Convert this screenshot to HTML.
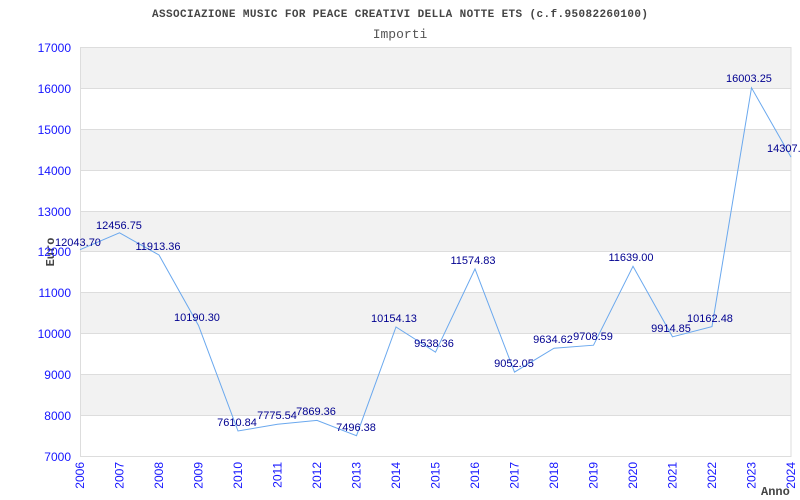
<!DOCTYPE html>
<html><head><style>
body{margin:0;background:#fff}
svg{display:block}
</style></head><body>
<svg width="800" height="500" xmlns="http://www.w3.org/2000/svg">
<rect width="800" height="500" fill="#fff"/>
<g fill="#f2f2f2">
<rect x="80" y="47" width="711" height="41"/>
<rect x="80" y="129" width="711" height="41"/>
<rect x="80" y="211" width="711" height="41"/>
<rect x="80" y="292" width="711" height="41"/>
<rect x="80" y="374" width="711" height="41"/>
</g>
<g stroke="#dddddd" stroke-width="1">
<line x1="80" y1="88.5" x2="791" y2="88.5"/>
<line x1="80" y1="129.5" x2="791" y2="129.5"/>
<line x1="80" y1="170.5" x2="791" y2="170.5"/>
<line x1="80" y1="211.5" x2="791" y2="211.5"/>
<line x1="80" y1="251.5" x2="791" y2="251.5"/>
<line x1="80" y1="292.5" x2="791" y2="292.5"/>
<line x1="80" y1="333.5" x2="791" y2="333.5"/>
<line x1="80" y1="374.5" x2="791" y2="374.5"/>
<line x1="80" y1="415.5" x2="791" y2="415.5"/>
<rect x="80.5" y="47.5" width="710.5" height="409" fill="none"/>
</g>
<g font-family="Liberation Mono, monospace" fill="#444">
<text x="400" y="17" text-anchor="middle" font-size="11" font-weight="bold" textLength="496">ASSOCIAZIONE MUSIC FOR PEACE CREATIVI DELLA NOTTE ETS (c.f.95082260100)</text>
<text x="400" y="38" text-anchor="middle" font-size="13" fill="#555">Importi</text>
<text transform="translate(54,252) rotate(-90)" text-anchor="middle" font-size="12" font-weight="bold">Euro</text>
<text x="761" y="495" font-size="12" font-weight="bold">Anno</text>
</g>
<g font-family="Liberation Sans, sans-serif" font-size="12" fill="#1515ff" text-anchor="end">
<text x="71" y="52">17000</text><text x="71" y="93">16000</text><text x="71" y="134">15000</text>
<text x="71" y="175">14000</text><text x="71" y="216">13000</text><text x="71" y="256">12000</text>
<text x="71" y="297">11000</text><text x="71" y="338">10000</text><text x="71" y="379">9000</text>
<text x="71" y="420">8000</text><text x="71" y="461">7000</text>
</g>
<g font-family="Liberation Sans, sans-serif" font-size="12" fill="#1515ff" text-anchor="end">
<text transform="translate(84,462) rotate(-90)">2006</text>
<text transform="translate(123.5,462) rotate(-90)">2007</text>
<text transform="translate(163,462) rotate(-90)">2008</text>
<text transform="translate(202.5,462) rotate(-90)">2009</text>
<text transform="translate(242,462) rotate(-90)">2010</text>
<text transform="translate(281.5,462) rotate(-90)">2011</text>
<text transform="translate(321,462) rotate(-90)">2012</text>
<text transform="translate(360.5,462) rotate(-90)">2013</text>
<text transform="translate(400,462) rotate(-90)">2014</text>
<text transform="translate(439.5,462) rotate(-90)">2015</text>
<text transform="translate(479,462) rotate(-90)">2016</text>
<text transform="translate(518.5,462) rotate(-90)">2017</text>
<text transform="translate(558,462) rotate(-90)">2018</text>
<text transform="translate(597.5,462) rotate(-90)">2019</text>
<text transform="translate(637,462) rotate(-90)">2020</text>
<text transform="translate(676.5,462) rotate(-90)">2021</text>
<text transform="translate(716,462) rotate(-90)">2022</text>
<text transform="translate(755.5,462) rotate(-90)">2023</text>
<text transform="translate(795,462) rotate(-90)">2024</text>
</g>
<polyline fill="none" stroke="#6aa8ee" stroke-width="1" points="80,249.7 119.5,232.8 159,255 198.5,325.5 238,431 277.5,424.3 317,420.4 356.5,435.7 396,327 435.5,352.2 475,268.9 514.5,372.1 554,348.2 593.5,345.2 633,266.3 672.5,336.8 712,326.6 751.5,87.8 791,157.1"/>
<g font-family="Liberation Sans, sans-serif" font-size="11" fill="#000090" text-anchor="middle">
<text x="78" y="246">12043.70</text>
<text x="119" y="229">12456.75</text>
<text x="158" y="250">11913.36</text>
<text x="197" y="321">10190.30</text>
<text x="237" y="426">7610.84</text>
<text x="277" y="419">7775.54</text>
<text x="316" y="415">7869.36</text>
<text x="356" y="431">7496.38</text>
<text x="394" y="322">10154.13</text>
<text x="434" y="347">9538.36</text>
<text x="473" y="264">11574.83</text>
<text x="514" y="367">9052.05</text>
<text x="553" y="343">9634.62</text>
<text x="593" y="340">9708.59</text>
<text x="631" y="261">11639.00</text>
<text x="671" y="332">9914.85</text>
<text x="710" y="322">10162.48</text>
<text x="749" y="82">16003.25</text>
<text x="790" y="152">14307.00</text>
</g>
</svg>
</body></html>
